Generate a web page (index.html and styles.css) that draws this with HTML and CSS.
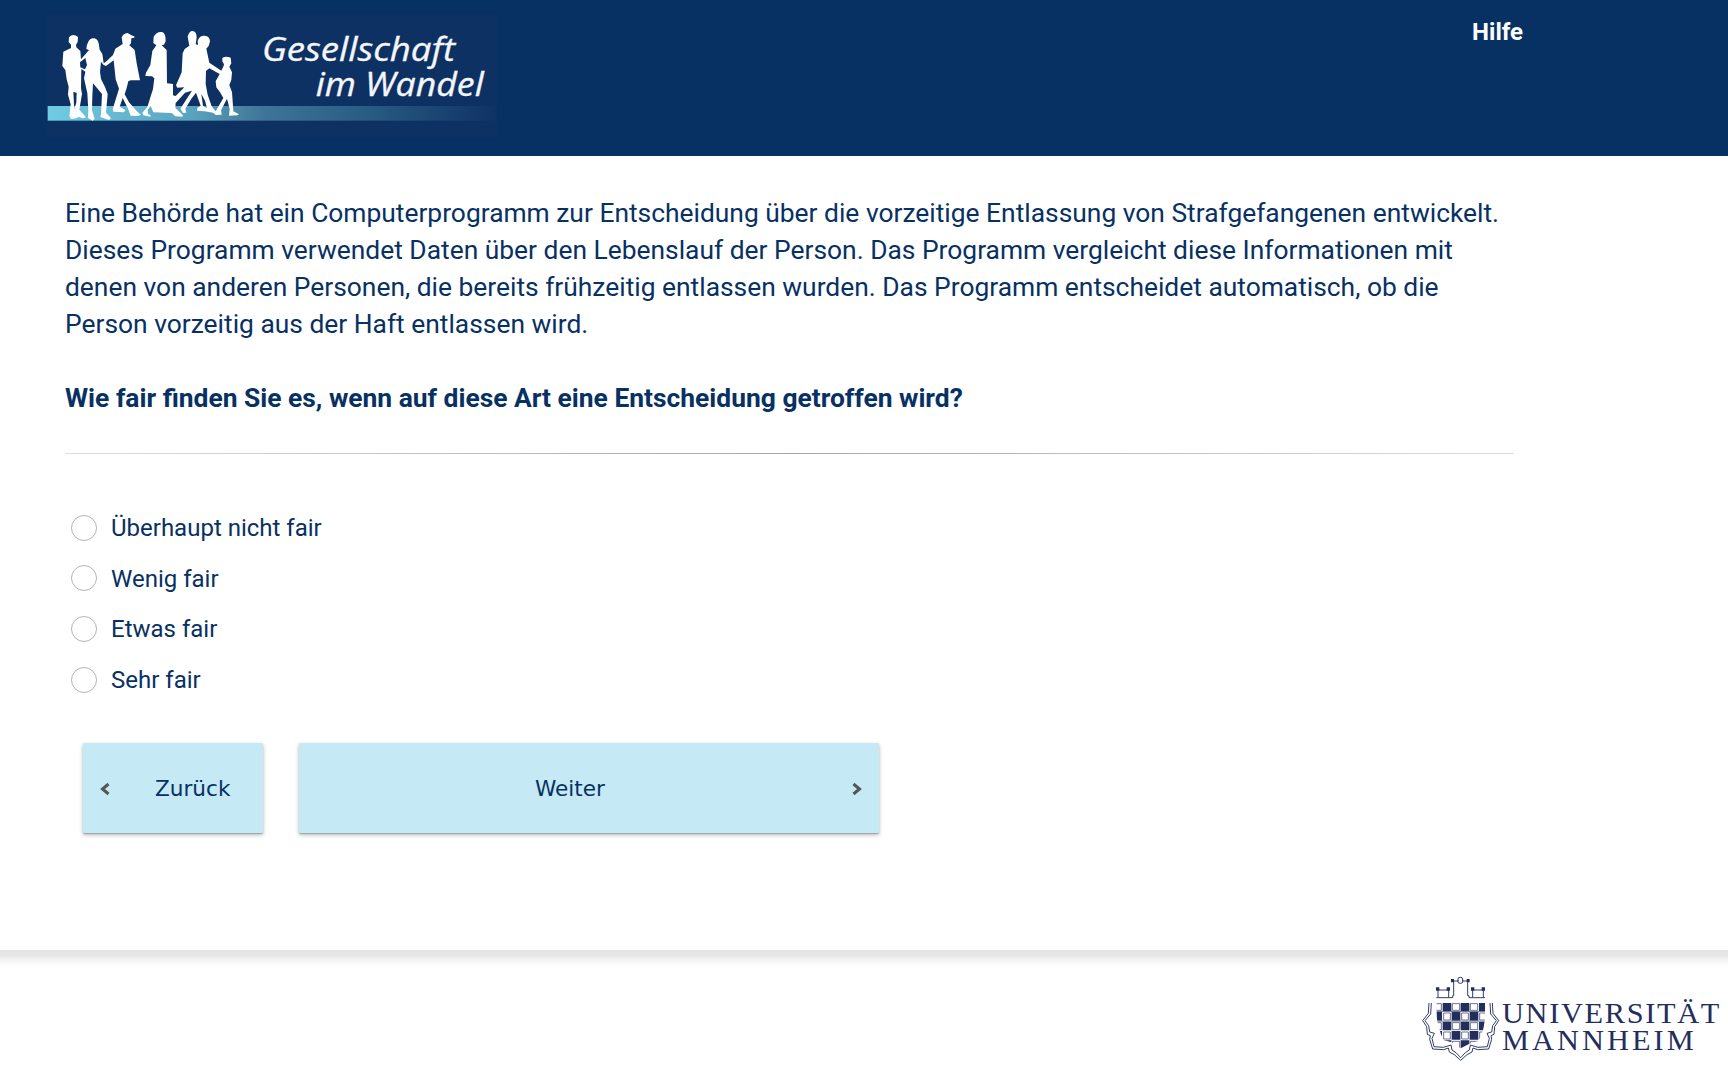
FILE: index.html
```html
<!DOCTYPE html>
<html lang="de">
<head>
<meta charset="utf-8">
<title>Gesellschaft im Wandel</title>
<link rel="stylesheet" href="styles.css">
</head>
<body>
<header class="header">
  <svg class="logo" viewBox="51 42 1350 369" role="img" aria-label="Gesellschaft im Wandel">
    <defs>
      <linearGradient id="band">
        <stop offset="0" stop-color="#70cce3"/>
        <stop offset=".32" stop-color="#5aa3bd"/>
        <stop offset=".48" stop-color="#3f7598"/>
        <stop offset=".72" stop-color="#285b82"/>
        <stop offset="1" stop-color="#0f3265"/>
      </linearGradient>
    </defs>
    <rect x="51" y="42" width="1350" height="369" fill="#0e3164"/>
    <rect x="53" y="318" width="1348" height="44" fill="url(#band)"/>
    <g fill="#fff">
      <path d="M117 112Q129 99 144 111L143 126L138 134L139 142L151 153L153 178L167 162L177 150L169 147Q172 118 187 115Q202 113 206 130L209 149L217 162L221 190L227 186L249 165L256 146L278 132L275 113Q279 100 293 99L304 106L313 109V113L304 115L303 130L298 136L314 150L320 190L330 241L302 241L295 244L290 264L284 283L297 307L322 335L333 344L325 348L302 347L294 326L278 294L269 320L287 331L281 337L250 335L248 328L267 266L257 238L251 181L228 198L220 194L213 185L210 216L213 237L225 261L233 282L228 338L243 354L237 360L211 351L213 343L216 282L189 250L187 287L186 331L194 357L188 362L174 354L175 333L172 280L162 235L166 215L154 207L153 265L156 282L148 329L168 352L160 355L144 350L142 354L123 357L118 348L122 313L114 284L116 260L110 238L106 210L97 198L100 155L123 144L123 134L116 126ZM140 278L130 276L132 314L132 329L139 308ZM166 174L150 187L151 202L165 208L171 195Z" fill-rule="evenodd"/>
      <path d="M371 110Q380 94 395 96Q408 98 407 124L402 134L395 136L410 150L411 250L429 252V286L437 288L463 262L442 263L438 256L455 217L458 160L464 147L478 137L473 110Q477 92 489 93Q500 95 500 113L497 133L504 135L503 123Q508 106 524 107Q539 108 540 124L536 138L529 146L538 188L574 212L581 197L582 193L577 184V174Q587 167 602 173L604 190L598 200L606 217L604 239L598 256L606 276L610 334L627 343L622 346L597 347L599 327L591 296L573 331L575 344L557 345L549 338L524 334L501 332L502 324L512 317L498 278L484 296L466 326L469 338L459 339L451 326L486 272L465 278L437 309L436 323L459 346L457 350L436 349L425 339L370 337L362 318L353 329L354 342L362 345L361 350L340 346L337 338L352 321L369 267L373 235L366 229L346 228L348 218L361 195L367 153L379 136L370 129ZM538 205L528 213L527 252L533 284L545 319L557 334L580 294L571 278L559 262L557 244L569 222ZM514 282L519 317L531 325L525 302Z" fill-rule="evenodd"/>
    </g>
    <g class="logo-text">
      <text x="696" y="184" textLength="579" lengthAdjust="spacingAndGlyphs">Gesellschaft</text>
      <text x="857" y="287" textLength="504" lengthAdjust="spacingAndGlyphs">im Wandel</text>
    </g>
  </svg>
  <a class="help">Hilfe</a>
</header>
<main class="main">
  <p class="intro">Eine Behörde hat ein Computerprogramm zur Entscheidung über die vorzeitige Entlassung von Strafgefangenen entwickelt.<br>Dieses Programm verwendet Daten über den Lebenslauf der Person. Das Programm vergleicht diese Informationen mit<br>denen von anderen Personen, die bereits frühzeitig entlassen wurden. Das Programm entscheidet automatisch, ob die<br>Person vorzeitig aus der Haft entlassen wird.</p>
  <p class="question">Wie fair finden Sie es, wenn auf diese Art eine Entscheidung getroffen wird?</p>
  <div class="rule"></div>
  <div class="options">
    <label class="option"><input class="radio" type="radio" name="fair">Überhaupt nicht fair</label>
    <label class="option"><input class="radio" type="radio" name="fair">Wenig fair</label>
    <label class="option"><input class="radio" type="radio" name="fair">Etwas fair</label>
    <label class="option"><input class="radio" type="radio" name="fair">Sehr fair</label>
  </div>
  <div class="buttons">
    <button class="button back"><svg class="chevron" viewBox="0 0 12 14"><path d="M9.5 2L3.5 7L9.5 12"/></svg><span class="back-label">Zurück</span></button>
    <button class="button next"><span class="next-label">Weiter</span><svg class="chevron" viewBox="0 0 12 14"><path d="M2.5 2L8.5 7L2.5 12"/></svg></button>
  </div>
</main>
<footer class="footer">
  <svg class="university" viewBox="60 135 924 279" role="img" aria-label="Universität Mannheim">
    <defs>
      <clipPath id="shield"><path d="M109 218H255V260Q253 292 244 315L235 333L207 342L182 355L155 337L130 330Q111 286 109 250Z"/></clipPath>
    </defs>
    <g clip-path="url(#shield)">
      <g fill="#232e5c">
        <path d="M128 218h26v25h-26zM182 218h26v25h-26zM237 218h20v25h-20zM109 246h17v26h-17zM155 246h26v26h-26zM209 246h26v26h-26zM128 275h26v26h-26zM182 275h26v26h-26zM237 275h20v26h-20zM109 303h17v26h-17zM155 303h26v26h-26zM209 303h26v26h-26zM128 331h26v26h-26zM182 331h26v26h-26z"/>
      </g>
      <g class="cells">
        <path d="M107 221h17v20h-17zM157 221h22v20h-22zM211 221h22v20h-22zM131 249h20v21h-20zM185 249h20v21h-20zM239 249h20v21h-20zM107 278h17v21h-17zM157 278h22v21h-22zM211 278h22v21h-22zM131 306h20v21h-20zM185 306h20v21h-20zM239 306h20v21h-20zM157 334h22v21h-22zM211 334h22v21h-22z"/>
      </g>
      <path class="cross" d="M109 244.5H255M109 273.5H255"/>
    </g>
    <g class="crest">
      <path d="M109 203H158V197H161V153H174V147Q174 142 181 142Q188 142 188 147V153H203V197H207V203H255M174 151V156Q174 160 181 160Q188 160 188 156V151M114 180V202M146 180V202M114 180H146M218 180V202M250 180V202M218 180H250"/>
      <path d="M87 219L85 250L68 272L80 290L82 313L91 317L89 328L98 357L131 359L145 354L148 366L163 374L182 391L201 374L216 366L219 354L233 359L266 357L275 328L273 317L282 313L284 290L296 272L279 250L277 219"/>
      <path d="M94 219L92 252L75 272L86 287L89 306L103 310L96 325L102 350L130 352L153 345L156 360L168 368L182 383L196 368L208 360L211 345L234 352L262 350L268 325L261 310L275 306L278 287L289 272L272 252L270 219"/>
    </g>
    <path fill="#232e5c" d="M153 147h9v10h-9zM200 147h9v10h-9zM108 172h10v10h-10zM140 172h10v10h-10zM213 172h10v10h-10zM245 172h10v10h-10z"/>
    <g class="university-text">
      <text x="306" y="280" textLength="652" lengthAdjust="spacing">UNIVERSITÄT</text>
      <text x="306" y="360" textLength="575" lengthAdjust="spacing">MANNHEIM</text>
    </g>
  </svg>
</footer>
</body>
</html>
```
FILE: styles.css
```css
* { box-sizing: border-box; }
body {
  margin: 0;
  height: 1068px;
  display: flex;
  flex-direction: column;
  overflow: hidden;
  background: #fff;
  color: #083163;
  font-family: Roboto, sans-serif;
}
.header {
  height: 156px;
  flex: none;
  display: flex;
  justify-content: space-between;
  align-items: flex-start;
  padding: 14px 205px 0 47px;
  background: #083163;
}
.logo { display: block; width: 450px; height: 123px; }
.logo-text {
  fill: #f4f6fa;
  stroke: #f4f6fa;
  stroke-width: 1;
  font: italic 400 96px "Open Sans", "Noto Sans", sans-serif;
}
.help {
  margin-top: 3px;
  color: #fff;
  font-size: 24px;
  line-height: 30px;
  font-weight: 700;
}
.main {
  height: 794px;
  flex: none;
  padding: 39px 0 0 65px;
}
.intro, .question {
  margin: 0;
  font-size: 26.38px;
  line-height: 37px;
  white-space: nowrap;
}
.question {
  margin-top: 37px;
  font-size: 26.4px;
  font-weight: 700;
}
.rule {
  width: 1449px;
  height: 1px;
  margin-top: 36px;
  background: linear-gradient(90deg, #dedede, #a6a6a6 50%, #dedede);
}
.options {
  display: grid;
  grid-auto-rows: 50.7px;
  margin-top: 48.35px;
  padding-left: 6px;
}
.option {
  display: flex;
  align-items: center;
  gap: 14px;
  padding-top: 2px;
  font-size: 24px;
  line-height: 27.7px;
}
.radio {
  appearance: none;
  width: 26px;
  height: 26px;
  margin: 0 0 2px;
  border: 1px solid #b4b4b4;
  border-radius: 50%;
  background: #fff;
}
.buttons {
  display: flex;
  gap: 36px;
  margin-top: 37.85px;
  padding-left: 18px;
}
.button {
  height: 90px;
  display: flex;
  align-items: center;
  padding: 0 16px;
  border: 0;
  border-radius: 1px;
  background: #c5e9f5;
  box-shadow: 0 2px 4px rgba(0, 0, 0, .28), 0 1px 1px rgba(0, 0, 0, .2);
  color: #083163;
  font: 21.6px "DejaVu Sans", sans-serif;
}
.back { width: 180px; }
.next { width: 580px; }
.back-label, .next-label { padding-top: 2px; }
.back-label { margin-left: 44px; }
.next-label { flex: 1; padding-right: 26px; }
.chevron {
  width: 12px;
  height: 14px;
  flex: none;
  margin-top: 2px;
  fill: none;
  stroke: #555;
  stroke-width: 3;
}
.footer {
  height: 118px;
  flex: none;
  display: flex;
  justify-content: flex-end;
  padding-top: 25px;
  background: linear-gradient(#e5e5e5 0, #e5e5e5 5px, #f3f3f3 10px, #fff 16px);
}
.university { display: block; width: 308px; height: 93px; }
.crest { fill: none; stroke: #232e5c; stroke-width: 2.8; }
.cells { fill: #fff; stroke: #232e5c; stroke-width: 2; }
.cross { fill: none; stroke: #777e9b; stroke-width: 3; }
.university-text {
  fill: #232e5c;
  font: 400 91px "Liberation Serif", serif;
}
```
